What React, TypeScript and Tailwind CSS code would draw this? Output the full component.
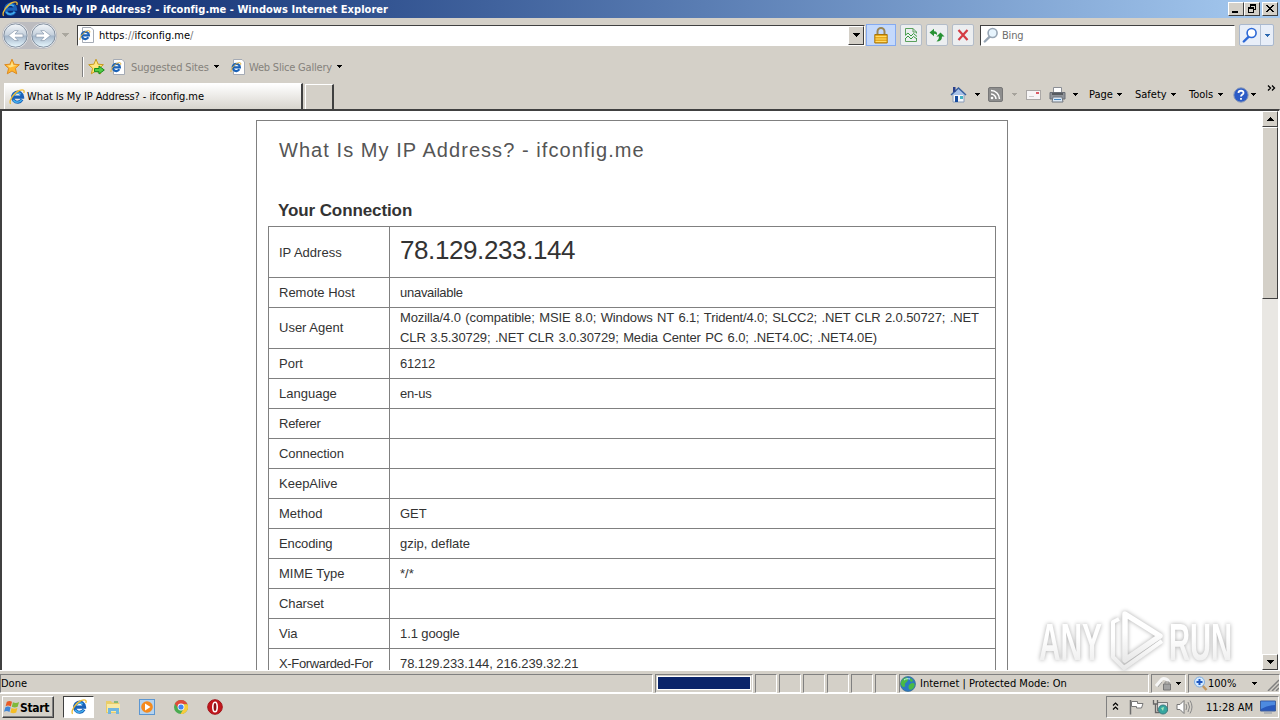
import React from 'react';

/**
 * Small triangle used by scroll and combo box buttons
 */
const Arrow: React.FC<{ color?: string; up?: boolean; className?: string }> = ({
  color = '#000',
  up = false,
  className = ''
}) => (
  <svg width="7" height="4" viewBox="0 0 7 4" shapeRendering="crispEdges" className={`shrink-0 ${className}`}>
    <path d={up ? 'M0 4L3.5 0L7 4Z' : 'M0 0H7L3.5 4Z'} fill={color} />
  </svg>
);

const SmallArrow: React.FC<{ color?: string }> = ({ color = '#000' }) => (
  <svg width="5" height="3" viewBox="0 0 5 3" shapeRendering="crispEdges" className="shrink-0">
    <path d="M0 0H5L2.5 3Z" fill={color} />
  </svg>
);

const IeGlyph: React.FC<{ size?: number }> = ({ size = 16 }) => (
  <svg width={size} height={size} viewBox="0 0 16 16" className="shrink-0">
    <path d="M13 10.6A5 5 0 1 1 13.6 8.2H5" fill="none" stroke="#1b62b8" strokeWidth="3.2" />
    <path d="M12.6 10.8A5 5 0 0 1 4.2 11M4.2 6.8A5 5 0 0 1 11.8 5.2" fill="none" stroke="#43b0ee" strokeWidth="1.6" />
    <path d="M1.6 14.8C-.6 12 5 3.6 10.6 1.4C14.4-.2 15.8 1.6 14.8 4" fill="none" stroke="#eebb35" strokeWidth="1.3" />
  </svg>
);

const IePage: React.FC = () => (
  <svg width="16" height="16" viewBox="0 0 16 16" className="shrink-0">
    <path d="M3.5 .5H12L14.5 3V15.5H3.5Z" fill="#fff" stroke="#a5abb5" />
    <path d="M9.4 10.3A3.6 3.6 0 1 1 9.9 8.3H3.8" fill="none" stroke="#1c63b7" strokeWidth="2.2" />
    <path d="M1 13C0 11 4.5 4.8 8.5 3.7C10.6 3.2 11.2 4.2 10.6 5.8" fill="none" stroke="#e3b23c" />
  </svg>
);

const Star: React.FC<{ add?: boolean }> = ({ add }) => (
  <svg width="17" height="18" viewBox="0 0 17 18" className="shrink-0">
    <path
      d="M8 1.2L10.1 6.2L15.4 6.7L11.4 10.3L12.7 15.8L8 13L3.3 15.8L4.6 10.3L.7 6.7L5.9 6.2Z"
      fill={add ? '#ffe86a' : '#ffb62e'}
      stroke={add ? '#c79a22' : '#dd8a20'}
    />
    <path d="M8 3.2L9.3 7.2L13 7.6L6 9.5L3 7.6L6.7 7.2Z" fill="#ffe48a" />
    {add && <path d="M6.5 10.5H11V8L16.3 12L11 16V13.7H6.5Z" fill="#52cc45" stroke="#178a1c" />}
  </svg>
);

const Orb: React.FC<{ forward?: boolean }> = ({ forward }) => (
  <svg width="27" height="27" viewBox="0 0 27 27" className="shrink-0">
    <defs>
      <linearGradient id="orb" x1="0" y1="0" x2="0" y2="1">
        <stop offset="0" stopColor="#f4f7fa" />
        <stop offset=".48" stopColor="#c4d0dc" />
        <stop offset=".52" stopColor="#a3b5c9" />
        <stop offset="1" stopColor="#e9f9ff" />
      </linearGradient>
    </defs>
    <circle cx="13.5" cy="13.5" r="12.6" fill="#f2f3f5" />
    <circle cx="13.5" cy="13.5" r="11.7" fill="url(#orb)" stroke="#7f8c9c" />
    <path
      d={
        forward
          ? 'M6 12H14L10.8 8.6H14.2L20.4 13.5L14.2 18.6H10.8L14 15.2H6Z'
          : 'M21 12H13L16.2 8.6H12.8L6.6 13.5L12.8 18.6H16.2L13 15.2H21Z'
      }
      fill="#fff"
      stroke="#8797aa"
      strokeWidth=".7"
    />
  </svg>
);

const Magnifier: React.FC<{ color: string; fill?: string }> = ({ color, fill = '#fff' }) => (
  <svg width="16" height="16" viewBox="0 0 16 16" className="shrink-0">
    <path d="M7 9.3L1.8 14.5" stroke={color} strokeWidth="2.4" strokeLinecap="round" />
    <circle cx="9.6" cy="6" r="4.5" fill={fill} stroke={color} strokeWidth="1.6" />
  </svg>
);

const ToolButton: React.FC<{ children: React.ReactNode }> = ({ children }) => (
  <div className="mr-1 flex h-[22px] w-[22px] items-center justify-center rounded-xs border border-[#b3bcc8] bg-[#eceef0]">
    {children}
  </div>
);

const WindowButton: React.FC<{ children: React.ReactNode }> = ({ children }) => (
  <div className="h-[14px] w-4 border border-t-white border-r-[#404040] border-b-[#404040] border-l-white bg-[#d4d0c8]">
    <svg width="14" height="12" viewBox="0 0 14 12" shapeRendering="crispEdges">
      {children}
    </svg>
  </div>
);

const TitleBar: React.FC = () => (
  <div className="flex h-[18px] items-center bg-linear-to-r from-[#0a246a] to-[#a6caf0] pr-[2px] pl-[2px]">
    <IeGlyph />
    <span className="ml-[2px] pt-0.5 text-[11px] font-bold tracking-[0.04px] text-white">
      What Is My IP Address? - ifconfig.me - Windows Internet Explorer
    </span>
    <div className="ml-auto flex">
      <WindowButton>
        <path d="M3 8H9V10H3Z" fill="#000" />
      </WindowButton>
      <WindowButton>
        <path d="M5 1H11V7H9V6H10V3H6V4H5ZM3 4H9V10H3ZM4 6V9H8V6Z" fill="#000" fillRule="evenodd" />
      </WindowButton>
      <div className="ml-[2px]">
        <WindowButton>
          <path
            d="M3 2H5V3H6V4H8V3H9V2H11V3H10V4H9V5H8V6H9V7H10V8H11V9H9V8H8V7H6V8H5V9H3V8H4V7H5V6H6V5H5V4H4V3H3Z"
            fill="#000"
          />
        </WindowButton>
      </div>
    </div>
  </div>
);

const NavBar: React.FC = () => (
  <div className="flex h-[34px] items-center pl-[2px]">
    <div className="flex gap-px rounded-full bg-[#bcbcc0]">
      <Orb />
      <Orb forward />
    </div>
    <Arrow color="#aaa79f" className="ml-[5px]" />
    <div className="ml-2 flex h-[21px] w-[788px] items-center border border-t-[#404040] border-r-white border-b-white border-l-[#404040] bg-white pl-px">
      <IePage />
      <span className="ml-[4px] pt-[3px] text-[11px] tracking-[0.01px]">
        https<span className="text-[#777]">://</span>ifconfig.me<span className="text-[#777]">/</span>
      </span>
      <div className="ml-auto flex h-[19px] w-4 items-center justify-center border border-t-white border-r-[#404040] border-b-[#404040] border-l-white bg-[#d4d0c8]">
        <Arrow />
      </div>
    </div>
    <div className="mr-1 ml-px flex h-[22px] w-[30px] items-center justify-center border border-[#84aaf0] bg-[#c4d9fc]">
      <svg width="14" height="17" viewBox="0 0 14 17">
        <path d="M3.5 8V4.5A3.5 3.5 0 0 1 10.5 4.5V8" fill="none" stroke="#9a8656" strokeWidth="2" />
        <path d="M.8 7.5H13.2V16H.8Z" fill="#e8a91c" stroke="#a8760c" />
        <path d="M1.5 9.5H12.5M1.5 12H12.5M1.5 14.5H12.5" stroke="#ffdc68" />
      </svg>
    </div>
    <ToolButton>
      <svg width="12" height="16" viewBox="0 0 12 16" fill="none">
        <path d="M.5 8V1.5H8L11.5 5V6.5M.5 12V14.5H11.5V11M8 1.5V5H11.5" stroke="#5aa05c" />
        <path d="M0 8.500L3 6L6 9L8.500 6.500L12 9.500M0 12L3 9L6 12L8.500 9.500L12 12" stroke="#379b3d" />
      </svg>
    </ToolButton>
    <ToolButton>
      <svg width="16" height="14" viewBox="0 0 16 14">
        <path d="M.5 4.500L5 .8V3.200Q8.500 3 8 7Q7 5.800 5 5.800V8.200Z" fill="#279133" />
        <path d="M15.500 8.500L11.500 4.500L7.500 8.500H10Q10.300 11.500 7.500 13.500Q13 13.500 13 8.500Z" fill="#279133" />
      </svg>
    </ToolButton>
    <ToolButton>
      <svg width="12" height="12" viewBox="0 0 12 12">
        <path d="M1.5 1L10.5 11M10.5 1L1.5 11" stroke="#d43b43" strokeWidth="2.2" />
      </svg>
    </ToolButton>
    <div className="ml-[2px] flex h-[21px] w-[255px] items-center border border-t-[#404040] border-r-white border-b-white border-l-[#404040] bg-white pl-[2px]">
      <Magnifier color="#98a6b5" fill="#e7f4fd" />
      <span className="ml-[3px] pt-[3px] text-[11px] tracking-[-0.2px] text-[#6d6d6d]">Bing</span>
    </div>
    <div className="ml-1 flex h-[22px] w-[35px] rounded-xs border border-[#a9b8ce] bg-[#e8eef8]">
      <div className="flex w-[21px] items-center justify-center border-r border-[#b3c0d3]">
        <Magnifier color="#2c68d6" />
      </div>
      <div className="flex flex-1 items-center justify-center">
        <SmallArrow color="#2c68b0" />
      </div>
    </div>
  </div>
);

const FavoritesBar: React.FC = () => (
  <div className="flex h-[29px] items-center pl-1 text-[11px]">
    <Star />
    <span className="ml-[3px] w-[58px] pt-0.5 tracking-[0.05px]">Favorites</span>
    <div className="h-5 w-[2px] border-l border-[#808080] bg-white" />
    <div className="ml-1">
      <Star add />
    </div>
    <div className="ml-[5px]">
      <IePage />
    </div>
    <span className="ml-[5px] w-[83px] pt-[3px] tracking-[-0.14px] whitespace-nowrap text-[#85827c]">
      Suggested Sites
    </span>
    <SmallArrow />
    <div className="ml-[11px]">
      <IePage />
    </div>
    <span className="ml-[3px] w-[88px] pt-[3px] tracking-[-0.2px] whitespace-nowrap text-[#85827c]">
      Web Slice Gallery
    </span>
    <SmallArrow />
  </div>
);

const CommandBar: React.FC = () => (
  <div className="ml-auto flex h-[27px] w-[330px] items-center text-[11px]">
    <svg width="17" height="17" viewBox="0 0 17 17" className="shrink-0">
      <path d="M3 8H14V16H3Z" fill="#f5f7fb" stroke="#8a9cb8" />
      <path d="M1 9L8.5 2L16 9" fill="#a9c2e8" stroke="#385f9e" strokeWidth="1.5" />
      <path d="M3 1H5.5V6H3Z" fill="#2a3f8b" />
      <path d="M5 10H8V16H5Z" fill="#174c9e" />
      <path d="M10 10H13V13H10Z" fill="#44b4c4" />
    </svg>
    <div className="ml-2">
      <SmallArrow />
    </div>
    <svg width="15" height="15" viewBox="0 0 15 15" className="ml-[8px] shrink-0">
      <rect x=".5" y=".5" width="14" height="14" rx="1.5" fill="#8d8d8d" stroke="#777" />
      <circle cx="4" cy="11" r="1.3" fill="#fff" />
      <path d="M3 7A5 5 0 0 1 8 12M3 3.5A8.500 8.500 0 0 1 11.500 12" fill="none" stroke="#fff" strokeWidth="1.5" />
    </svg>
    <div className="ml-[9px]">
      <SmallArrow color="#a6a39c" />
    </div>
    <svg width="15" height="10" viewBox="0 0 15 10" className="ml-[9px] shrink-0">
      <rect x=".5" y=".5" width="14" height="9" fill="#f7f5f6" stroke="#aaa7a5" />
      <path d="M10 2H13V4H10Z" fill="#db5b66" />
      <path d="M3 6.5H8" stroke="#ccc" />
    </svg>
    <svg width="17" height="16" viewBox="0 0 17 16" className="ml-2 shrink-0">
      <path d="M4.5 .5H12.5V6H4.500Z" fill="#fff" stroke="#8b8e95" />
      <path d="M1 5.5H16V12H1Z" fill="#8f9399" stroke="#6a6e76" />
      <path d="M3 7H14" stroke="#44484e" strokeWidth="1.5" />
      <path d="M4 10H13L14 15H3Z" fill="#dce9f6" stroke="#70757d" />
      <path d="M5 12.5H12" stroke="#4687c0" />
    </svg>
    <div className="ml-[7px]">
      <SmallArrow />
    </div>
    <span className="ml-[11px] w-7 pt-0.5">Page</span>
    <SmallArrow />
    <span className="ml-[13px] w-9 pt-0.5">Safety</span>
    <SmallArrow />
    <span className="ml-[13px] w-[29px] pt-0.5">Tools</span>
    <SmallArrow />
    <svg width="16" height="16" viewBox="0 0 16 16" className="ml-[10px] shrink-0">
      <circle cx="8" cy="8" r="7.2" fill="#2d5cc6" stroke="#8c9ab8" />
      <path
        d="M5.5 6C5.5 3 10.7 3 10.5 6C10.4 7.6 8 7.6 8 9.6M8 11V12.8"
        fill="none"
        stroke="#fff"
        strokeWidth="1.8"
      />
    </svg>
    <div className="ml-[2px]">
      <SmallArrow />
    </div>
    <svg width="9" height="6" viewBox="0 0 9 6" className="mb-3.5 ml-[11px] shrink-0">
      <path d="M1 .5L3.5 3L1 5.500M5 .5L7.5 3L5 5.500" fill="none" stroke="#000" strokeWidth="1.3" />
    </svg>
  </div>
);

const TabRow: React.FC = () => (
  <div className="flex h-7 items-start pl-1">
    <div className="mt-[2px] flex h-[26px] w-[299px] items-center border-t border-r-2 border-l border-t-white border-r-[#404040] border-l-white bg-linear-to-b from-white to-[#d8d5ce] pl-1">
      <IeGlyph />
      <span className="ml-[2px] pt-0.5 text-[11px] tracking-[-0.08px]">What Is My IP Address? - ifconfig.me</span>
    </div>
    <div className="mt-[3px] ml-[2px] h-[25px] w-[29px] border-t border-r-2 border-l border-t-white border-r-[#404040] border-l-white" />
    <CommandBar />
  </div>
);

const ROWS: { label: string; value: string; labelClass?: string; valueClass?: string }[] = [
  { label: 'Remote Host', value: 'unavailable', valueClass: 'tracking-[-0.27px]' },
  {
    label: 'User Agent',
    value:
      'Mozilla/4.0 (compatible; MSIE 8.0; Windows NT 6.1; Trident/4.0; SLCC2; .NET CLR 2.0.50727; .NET CLR 3.5.30729; .NET CLR 3.0.30729; Media Center PC 6.0; .NET4.0C; .NET4.0E)',
    valueClass: 'tracking-[-0.12px] [word-spacing:1px]'
  },
  { label: 'Port', value: '61212', valueClass: 'tracking-[-0.2px]' },
  { label: 'Language', value: 'en-us', valueClass: 'tracking-[-0.2px]' },
  { label: 'Referer', value: '', labelClass: 'tracking-[-0.25px]' },
  { label: 'Connection', value: '', labelClass: 'tracking-[-0.1px]' },
  { label: 'KeepAlive', value: '' },
  { label: 'Method', value: 'GET' },
  { label: 'Encoding', value: 'gzip, deflate', labelClass: 'tracking-[-0.1px]' },
  { label: 'MIME Type', value: '*/*' },
  { label: 'Charset', value: '', labelClass: 'tracking-[-0.1px]' },
  { label: 'Via', value: '1.1 google', valueClass: 'tracking-[-0.1px]' },
  {
    label: 'X-Forwarded-For',
    value: '78.129.233.144, 216.239.32.21',
    labelClass: 'tracking-[-0.35px]',
    valueClass: 'tracking-[-0.08px]'
  }
];

const Page: React.FC = () => (
  <div className="ml-[254px] w-[752px] border border-[#808080] font-['Liberation_Sans',Arial,sans-serif] text-[#333]">
    <h1 className="mt-[15px] ml-[22px] text-[20px] leading-7 tracking-[1.06px] whitespace-nowrap text-[#555]">
      What Is My IP Address? - ifconfig.me
    </h1>
    <h2 className="mt-[35px] ml-[21px] text-[17px] leading-6 font-bold tracking-[-0.1px]">Your Connection</h2>
    <div className="mt-[3px] ml-[11px] w-[728px] border border-[#808080] text-[13px] leading-5">
      <div className="flex h-[50px]">
        <div className="flex w-[121px] items-center border-r border-[#808080] pt-0.5 pl-[10px]">IP Address</div>
        <div className="pt-[9px] pl-[10px] text-[26px] leading-7 tracking-[-0.4px]">78.129.233.144</div>
      </div>
      {ROWS.map(({ label, value, labelClass = '', valueClass = '' }) => (
        <div
          key={label}
          className={`flex border-t border-[#808080] ${label === 'User Agent' ? 'h-[41px]' : 'h-[30px]'}`}
        >
          <div
            className={`flex w-[121px] items-center border-r border-[#808080] pl-[10px] whitespace-nowrap ${labelClass}`}
          >
            {label}
          </div>
          <div className={`flex flex-1 items-center pr-2 pl-[10px] ${valueClass}`}>{value}</div>
        </div>
      ))}
    </div>
  </div>
);

const ScrollBar: React.FC = () => (
  <div className="mr-px flex w-4 flex-col bg-[#e9e7e3]">
    <div className="flex h-4 items-center justify-center border border-t-white border-r-[#404040] border-b-[#404040] border-l-white bg-[#d4d0c8]">
      <Arrow up />
    </div>
    <div className="h-[172px] border border-t-white border-r-[#404040] border-b-[#404040] border-l-white bg-[#d4d0c8]" />
    <div className="mt-auto flex h-4 items-center justify-center border border-t-white border-r-[#404040] border-b-[#404040] border-l-white bg-[#d4d0c8]">
      <Arrow />
    </div>
  </div>
);

const Watermark: React.FC = () => (
  <svg
    width="220"
    height="72"
    viewBox="0 0 220 72"
    className="absolute top-[603px] left-[1032px] overflow-visible drop-shadow-[0_0_2px_#aaa]"
  >
    <defs>
      <linearGradient id="mark" x1="0" y1="0" x2="0" y2="1">
        <stop offset=".4" stopColor="#fff" />
        <stop offset="1" stopColor="#e9e9e9" />
      </linearGradient>
    </defs>
    <g
      fill="url(#mark)"
      fontFamily="Liberation Sans Narrow, Liberation Sans, sans-serif"
      fontSize="52"
      fontWeight="bold"
    >
      <text x="7" y="57" textLength="63" lengthAdjust="spacingAndGlyphs">
        ANY
      </text>
      <text x="137" y="57" textLength="63" lengthAdjust="spacingAndGlyphs">
        RUN
      </text>
    </g>
    <g fill="none" stroke="url(#mark)" strokeLinejoin="round">
      <path d="M93 11L128 33L93 57Z" strokeWidth="5.500" />
      <path d="M87 16L81 19V54L92 65L130 38" strokeWidth="4" />
    </g>
  </svg>
);

const Panel: React.FC<{ className: string; children?: React.ReactNode }> = ({ className, children }) => (
  <div
    className={`flex h-[19px] shrink-0 items-center border border-t-[#808080] border-r-white border-b-white border-l-[#808080] ${className}`}
  >
    {children}
  </div>
);

const StatusBar: React.FC = () => (
  <div className="flex h-6 items-start border-t border-b border-white pt-[3px] text-[11px]">
    <Panel className="w-[653px] pt-0.5">Done</Panel>
    <Panel className="ml-[2px] w-[98px] px-px">
      <div className="mb-px h-[14px] w-[94px] border border-white bg-[#0a246a]" />
    </Panel>
    <div className="ml-[2px] flex gap-[2px]">
      {[0, 1, 2, 3, 4, 5].map((i) => (
        <Panel key={i} className="w-[22px]" />
      ))}
    </div>
    <Panel className="ml-[2px] w-[250px]">
      <svg width="16" height="16" viewBox="0 0 16 16" className="shrink-0">
        <circle cx="8" cy="8" r="7.5" fill="#2b78c2" stroke="#386b91" strokeWidth=".7" />
        <path
          d="M3 3C6 1 9 1 8 4S4 7 5 9S3 12 1.500 9.500S1.500 5 3 3ZM10 8C13 6 15.500 7 14.500 10S10 15 9 13S8.500 9 10 8ZM10 2L13 4L12 6L10 5Z"
          fill="#49b946"
        />
        <path d="M4 4C6 2.5 8 2.5 10 3" stroke="#c9eeff" fill="none" />
      </svg>
      <span className="ml-1 pt-0.5">Internet | Protected Mode: On</span>
    </Panel>
    <Panel className="ml-[2px] w-[35px] pl-[3px]">
      <svg width="18" height="16" viewBox="0 0 18 16">
        <path d="M1 10L7 3C9 2 13 3 14 6" fill="none" stroke="#f6f6f6" strokeWidth="3" />
        <path d="M3 11L7 6" stroke="#a4a4a4" />
        <path d="M8.5 8H15.5V14H8.5Z" fill="#a2a2a2" stroke="#777" />
        <path d="M10 8V6H14V8" fill="none" stroke="#888" />
      </svg>
      <div className="ml-[3px]">
        <SmallArrow />
      </div>
    </Panel>
    <Panel className="ml-[2px] w-[92px] pl-[5px]">
      <svg width="14" height="16" viewBox="0 0 14 16" className="shrink-0">
        <path d="M8 9L12.5 14" stroke="#c39760" strokeWidth="2.5" />
        <circle cx="5.5" cy="6" r="5" fill="#d4eaff" stroke="#80aee0" />
        <path d="M5.5 3V9M2.5 6H8.5" stroke="#1f57c0" strokeWidth="2" />
      </svg>
      <span className="w-[44px] pt-0.5">100%</span>
      <SmallArrow />
      <svg width="12" height="14" viewBox="0 0 12 14" className="ml-auto shrink-0">
        <path d="M1 14L12 3M5 14L12 7M9 14L12 11" stroke="#808080" strokeWidth="1.5" />
      </svg>
    </Panel>
  </div>
);

const TaskBar: React.FC = () => (
  <div className="flex h-[26px] items-start pt-[2px] pl-[2px] text-[11px]">
    <div className="flex h-[22px] w-[52px] items-center border border-t-white border-r-[#404040] border-b-[#404040] border-l-white pl-px shadow-[inset_-1px_-1px_#808080]">
      <svg width="16" height="16" viewBox="0 0 17 16" className="shrink-0">
        <path d="M3 2.5Q6 .5 8.5 2.5L7.3 7.5Q4.5 5.7 1.7 7.2Z" fill="#e85a24" />
        <path d="M9.5 3Q12.5 4.8 16 2.8L14.5 7.8Q11.5 9.5 8.3 7.8Z" fill="#7fb93a" />
        <path d="M1.5 8.2Q4.5 6.800 7 8.5L5.8 13.3Q3 11.5 0 13Z" fill="#3f85d6" />
        <path d="M8 9Q11 10.6 14.2 9L13 13.8Q10 15.5 6.8 13.8Z" fill="#f5bd25" />
      </svg>
      <span className="pt-px text-[12px] font-bold tracking-[-0.3px]">Start</span>
    </div>
    <div className="ml-[9px] flex h-[22px] w-[31px] items-center justify-center border border-t-[#404040] border-r-white border-b-white border-l-[#404040] bg-white">
      <IeGlyph />
    </div>
    {/* Quick launch */}
    <div className="mt-[3px] ml-[11px] flex gap-[18px]">
      <svg width="16" height="16" viewBox="0 0 16 16">
        <path d="M1 2H6L7 3.5H14V14H1Z" fill="#e9cd69" />
        <path d="M2 5H15V13H2Z" fill="#f8e9a4" />
        <path d="M3 15V9H14V15H11V12H6V15Z" fill="#71b6df" />
        <path d="M9 3H13" stroke="#6bb068" strokeWidth="1.5" />
      </svg>
      <svg width="16" height="16" viewBox="0 0 16 16">
        <rect x=".5" y=".5" width="15" height="15" fill="#b5d3ef" stroke="#5c96d1" />
        <circle cx="8" cy="8" r="5.8" fill="#f58a1d" />
        <path d="M6 4.5L11.5 8L6 11.5Z" fill="#fff" />
      </svg>
      <svg width="16" height="16" viewBox="0 0 16 16">
        <circle cx="8" cy="8" r="7" fill="#4aab50" />
        <path d="M1.8 4.8A7 7 0 0 1 14.5 5.2H8L5.5 9.5Z" fill="#e04a3b" />
        <path d="M14.5 5.2A7 7 0 0 1 7.5 15L10.8 9.5L10.5 5.2Z" fill="#f9cb3c" />
        <circle cx="8" cy="8" r="3.4" fill="#fff" />
        <circle cx="8" cy="8" r="2.6" fill="#4285f4" />
      </svg>
      <svg width="16" height="16" viewBox="0 0 16 16">
        <circle cx="8" cy="8" r="7.3" fill="#c3161c" stroke="#a1141a" />
        <ellipse cx="8" cy="8" rx="2.2" ry="4.8" fill="#8d1116" stroke="#fff" strokeWidth="1.6" />
      </svg>
    </div>
    {/* Tray */}
    <div className="mr-px ml-auto flex h-[22px] w-[173px] items-center border border-t-[#808080] border-r-white border-b-white border-l-[#808080] pl-[5px]">
      <svg width="7" height="8" viewBox="0 0 7 8" className="mb-0.5">
        <path d="M1 3.5L3.5 1L6 3.5M1 7.5L3.5 5L6 7.5" fill="none" stroke="#000" strokeWidth="1.2" />
      </svg>
      <svg width="17" height="16" viewBox="0 0 17 16" className="ml-[9px]">
        <path d="M2.5 1V15.5" stroke="#6d6d6d" strokeWidth="1.5" />
        <path d="M3.5 2.5H9.5V4.500H15L13.5 9H8.5V7.5H3.5Z" fill="#fff" stroke="#777" />
      </svg>
      <svg width="17" height="16" viewBox="0 0 17 16" className="ml-[7px]">
        <path d="M5.5 3.5H15.5V12H5.5Z" fill="#e5e5e5" stroke="#777" />
        <path d="M1.5 1V5H5.5V1M3.5 5V13.500H8" fill="none" stroke="#666" strokeWidth="1.3" />
        <circle cx="11" cy="10.5" r="4.5" fill="#36a7a0" stroke="#3a7a80" />
        <path d="M9 9L12 8L11 12Z" fill="#a3e7b7" />
      </svg>
      <svg width="17" height="16" viewBox="0 0 17 16" className="ml-[7px]" fill="none">
        <path d="M1 5.5H4L8 1.5V14.5L4 10.500H1Z" fill="#fff" stroke="#777" />
        <path d="M10 5Q11.5 8 10 11M12 3Q15 8 12 13M14 1.5Q18 8 14 14.5" stroke="#888" />
      </svg>
      <span className="ml-[13px] w-[47px] pt-0.5 whitespace-nowrap">11:28 AM</span>
      <svg width="16" height="14" viewBox="0 0 16 14" className="ml-[7px]">
        <path d="M.5 1H15.5V11H.5Z" fill="#2859bd" stroke="#3e5f9b" />
        <path d="M1 1.5H15V5Q8 5 1 9Z" fill="#4d8ae0" />
        <path d="M4 13H12" stroke="#8b95a3" />
      </svg>
    </div>
  </div>
);

export default function App() {
  return (
    <div className="relative h-[720px] w-[1280px] overflow-hidden bg-[#d4d0c8] font-['DejaVu_Sans_Condensed','DejaVu_Sans',sans-serif] text-black [font-stretch:condensed]">
      <TitleBar />
      <NavBar />
      <FavoritesBar />
      <TabRow />
      <div className="flex h-[561px] border-t-2 border-r border-l-2 border-t-[#404040] border-r-white border-l-[#404040] bg-white">
        <div className="flex-1 overflow-hidden pt-[9px]">
          <Page />
        </div>
        <ScrollBar />
      </div>
      <StatusBar />
      <TaskBar />
      <Watermark />
    </div>
  );
}
